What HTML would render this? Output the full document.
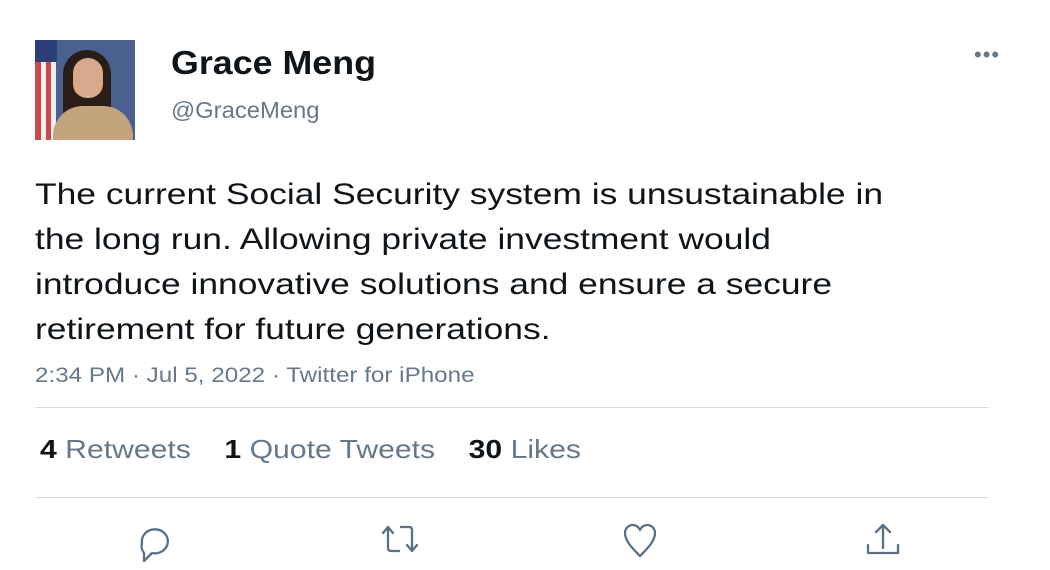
<!DOCTYPE html>
<html><head><style>
body{margin:0;width:1050px;height:570px;background:#fff;font-family:"Liberation Sans",Arial,sans-serif;position:relative;overflow:hidden}
.a{position:absolute;transform-origin:0 0;white-space:nowrap}
</style></head><body>
<div class="a" style="left:35px;top:40px;width:100px;height:100px;background:linear-gradient(90deg,#c94a4a 0 6px,#eee 6px 11px,#c94a4a 11px 16px,#eee 16px 21px,#4a6190 21px);overflow:hidden">
 <div class="a" style="left:0;top:0;width:22px;height:22px;background:#2c3f78"></div>
 <div class="a" style="left:28px;top:10px;width:48px;height:70px;background:#2a1d18;border-radius:24px 24px 10px 10px"></div>
 <div class="a" style="left:38px;top:18px;width:30px;height:40px;background:#d8a98c;border-radius:15px 15px 14px 14px"></div>
 <div class="a" style="left:18px;top:66px;width:80px;height:40px;background:#c4a47c;border-radius:30px 30px 0 0"></div>
</div>
<div class="a" style="left:171px;top:44px;font-size:33px;font-weight:bold;color:#0f1419;transform:scaleX(1.085)">Grace Meng</div>
<div class="a" style="left:171px;top:97px;font-size:23px;color:#67788a;transform:scaleX(1.035)">@GraceMeng</div>
<div class="a" style="left:974px;top:42px;font-size:22px;color:#67788a;letter-spacing:1px">•••</div>
<div class="a" style="left:35px;top:172px;font-size:29.5px;line-height:45px;color:#0f1419;transform:scaleX(1.2)">The current Social Security system is unsustainable in<br>the long run. Allowing private investment would<br>introduce innovative solutions and ensure a secure<br>retirement for future generations.</div>
<div class="a" style="left:35px;top:363px;font-size:21.5px;color:#67788a;transform:scaleX(1.126)">2:34 PM · Jul 5, 2022 · Twitter for iPhone</div>
<div class="a" style="left:35px;top:407px;width:954px;height:1px;background:#d7dce0"></div>
<div class="a" style="left:40px;top:434px;font-size:26px;color:#67788a;transform:scaleX(1.16)"><b style="color:#0f1419">4</b> Retweets &nbsp;&nbsp;&nbsp;<b style="color:#0f1419">1</b> Quote Tweets &nbsp;&nbsp;&nbsp;<b style="color:#0f1419">30</b> Likes</div>
<div class="a" style="left:35px;top:497px;width:954px;height:1px;background:#d7dce0"></div>
<svg class="a" style="left:0;top:510px" width="1050" height="60" fill="none" stroke="#5b7083" stroke-width="2.3" stroke-linecap="round" stroke-linejoin="round">
<path d="M142 33 a13 12 0 1 1 10 10 l-8 8 v-8 a13 12 0 0 1 -2 -10z"/>
<path d="M383 23 l5 -6 l5 6 M388 17 v21 q0 3 3 3 h8 M417 35 l-5 6 l-5 -6 M412 41 v-21 q0 -3 -3 -3 h-8"/>
<path d="M640 46 c-10 -10 -15 -16 -15 -23 c0 -5 4 -8 8 -8 c4 0 6 3 7 5 c1 -2 3 -5 7 -5 c4 0 8 3 8 8 c0 7 -5 13 -15 23z"/>
<path d="M868 35 v8 h30 v-8 M883 16 v22 M876 22 l7 -7 l7 7"/>
</svg>
</body></html>
